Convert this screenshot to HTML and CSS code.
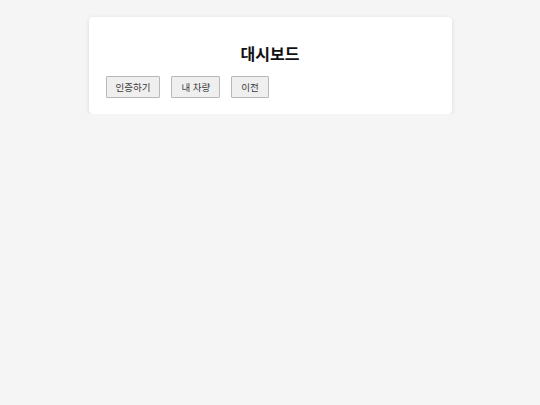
FILE: index.html
```html
<!DOCTYPE html>
<html lang="ko">
<head>
    <meta charset="UTF-8">
    <meta name="viewport" content="width=device-width, initial-scale=1.0">
    <title>대시보드</title>
    <link rel="stylesheet" href="styles.css">
</head>
<body>
    <div class="dashboard-container">
        <h1 class="dashboard-title">대시보드</h1>
        <div class="button-row">
            <button type="button" class="nav-button">인증하기</button>
            <button type="button" class="nav-button">내 차량</button>
            <button type="button" class="nav-button">이전</button>
        </div>
    </div>
</body>
</html>
```

FILE: styles.css
```css
body {
    font-family: 'Noto Sans CJK KR', 'Noto Sans', sans-serif;
    margin: 0;
    padding: 17px 0 0;
    background: #f5f5f5;
    color: #111;
}

.dashboard-container {
    background: white;
    width: 363px;
    margin: 0 auto;
    box-sizing: border-box;
    padding: 17px 17px 16px;
    border-radius: 4px;
    box-shadow: 0 1px 4px rgba(0,0,0,0.12);
}

.dashboard-title {
    text-align: center;
    font-size: 16px;
    font-weight: bold;
    margin: 8px 0 12px;
    line-height: 1.4;
}

.button-row {
    display: flex;
    gap: 11px;
}

.nav-button {
    font-family: inherit;
    font-size: 9.5px;
    font-weight: normal;
    line-height: 14px;
    padding: 3px 9px;
    background: #efefef;
    color: #3a3a3a;
    border: 1px solid #b8b8b8;
    border-radius: 1px;
    cursor: pointer;
}
```
